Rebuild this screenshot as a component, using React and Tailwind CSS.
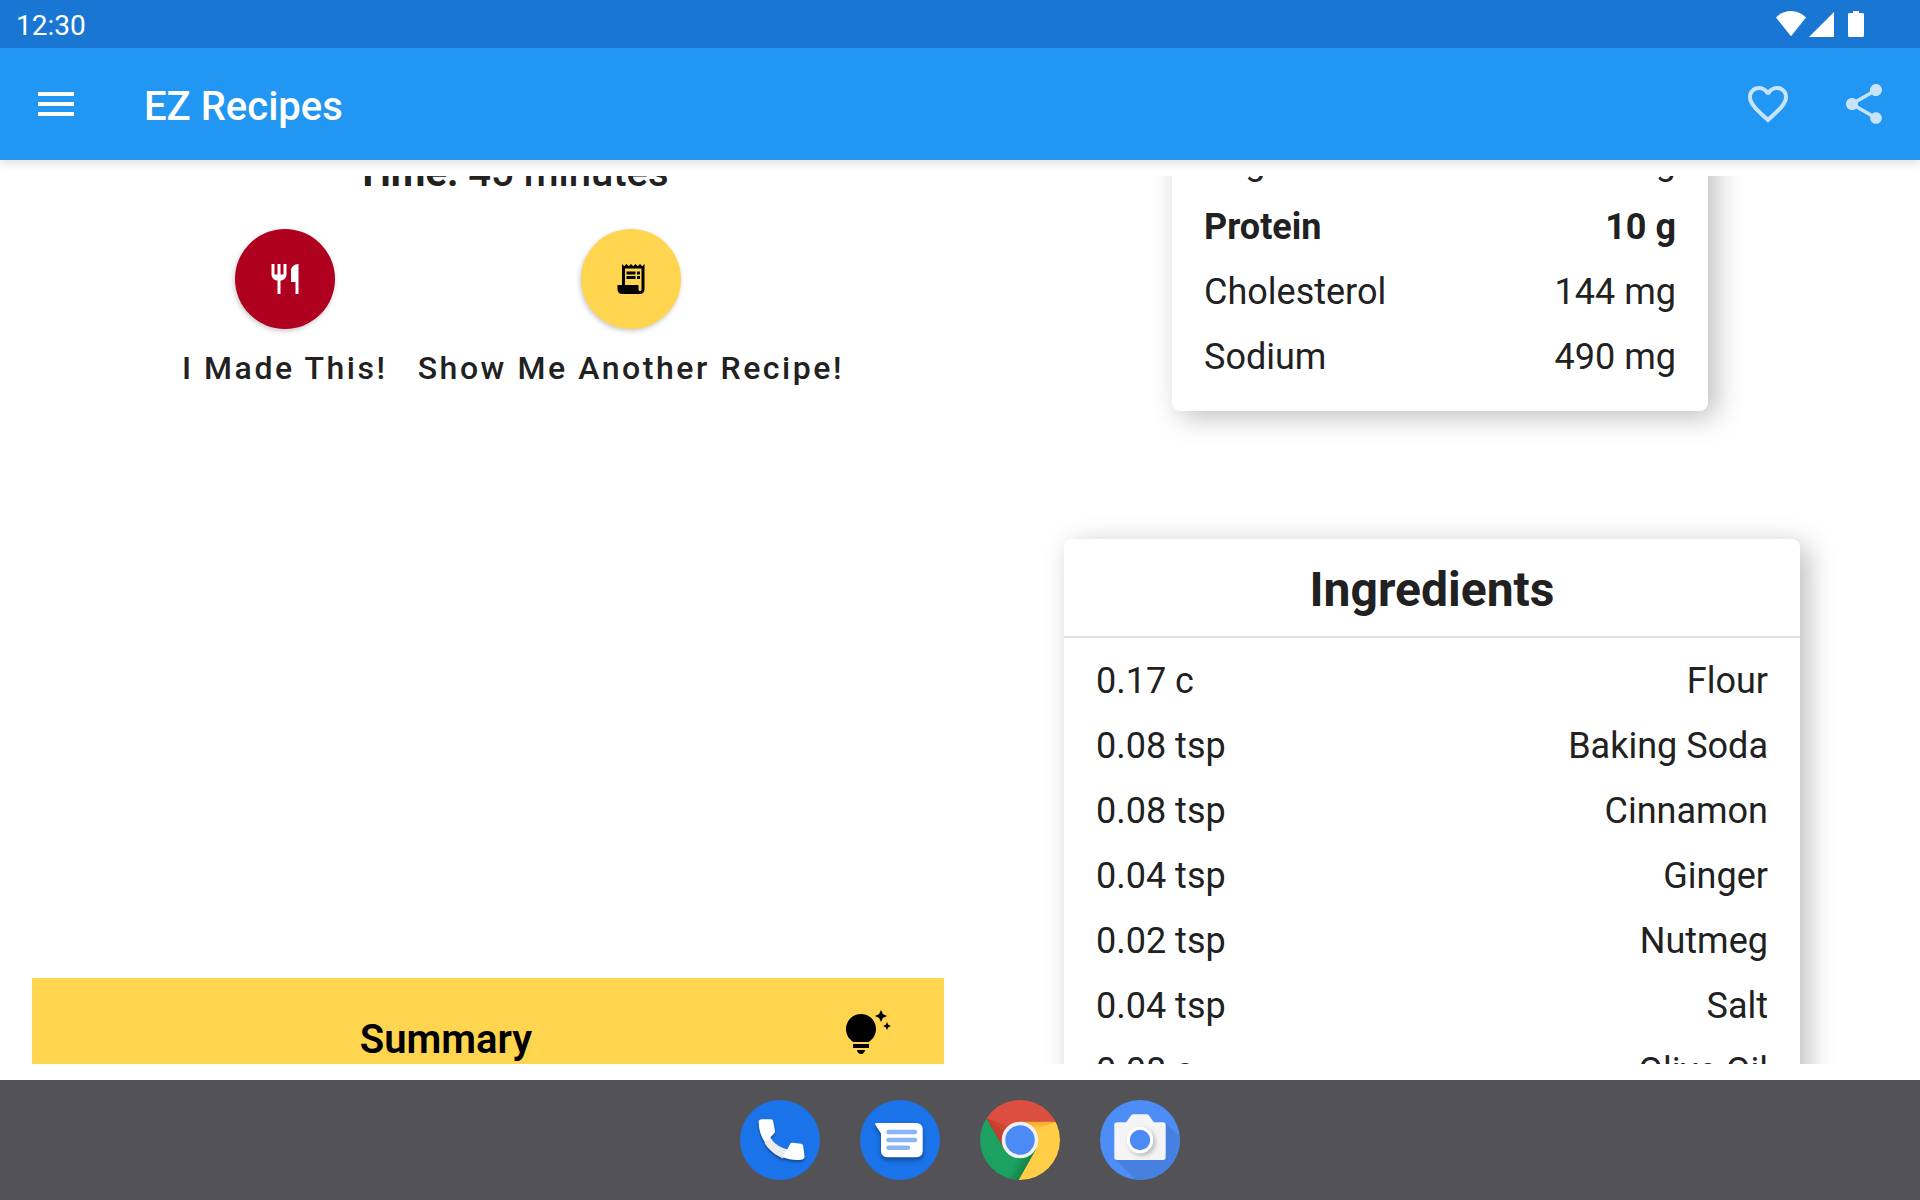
const nutrition = [
  { name: "Sugar", amount: "0 g" },
  { name: "Protein", amount: "10 g", bold: true },
  { name: "Cholesterol", amount: "144 mg" },
  { name: "Sodium", amount: "490 mg" },
];

const ingredients = [
  { amount: "0.17 c", name: "Flour" },
  { amount: "0.08 tsp", name: "Baking Soda" },
  { amount: "0.08 tsp", name: "Cinnamon" },
  { amount: "0.04 tsp", name: "Ginger" },
  { amount: "0.02 tsp", name: "Nutmeg" },
  { amount: "0.04 tsp", name: "Salt" },
  { amount: "0.08 c", name: "Olive Oil" },
];

function Icon({ path, className }) {
  return (
    <svg viewBox="0 0 24 24" fill="currentColor" aria-hidden="true" className={className}>
      <path d={path} />
    </svg>
  );
}

const icons = {
  menu: "M3 18h18v-2H3v2zm0-5h18v-2H3v2zm0-7v2h18V6H3z",
  heart:
    "M16.5 3c-1.74 0-3.41.81-4.5 2.09C10.91 3.81 9.24 3 7.5 3 4.42 3 2 5.42 2 8.5c0 3.78 3.4 6.86 8.55 11.54L12 21.35l1.45-1.32C18.6 15.36 22 12.28 22 8.5 22 5.42 19.58 3 16.5 3zm-4.4 15.55l-.1.1-.1-.1C7.14 14.24 4 11.39 4 8.5 4 6.5 5.5 5 7.5 5c1.54 0 3.04.99 3.57 2.36h1.87C13.46 5.99 14.96 5 16.5 5c2 0 3.5 1.5 3.5 3.5 0 2.89-3.14 5.74-7.9 10.05z",
  share:
    "M18 16.08c-.76 0-1.44.3-1.96.77L8.91 12.7c.05-.23.09-.46.09-.7s-.04-.47-.09-.7l7.05-4.11c.54.5 1.25.81 2.04.81 1.66 0 3-1.34 3-3s-1.34-3-3-3-3 1.34-3 3c0 .24.04.47.09.7L8.04 9.81C7.5 9.31 6.79 9 6 9c-1.66 0-3 1.34-3 3s1.34 3 3 3c.79 0 1.5-.31 2.04-.81l7.12 4.16c-.05.21-.08.43-.08.65 0 1.61 1.31 2.92 2.92 2.92s2.92-1.31 2.92-2.92-1.31-2.92-2.92-2.92z",
  restaurant:
    "M16 6v8h3v8h2V2c-2.76 0-5 2.24-5 4zM11 9H9V2H7v7H5V2H3v7c0 2.21 1.79 4 4 4v9h2v-9c2.21 0 4-1.79 4-4V2h-2v7z",
  receipt:
    "M19.5 3.5L18 2l-1.5 1.5L15 2l-1.5 1.5L12 2l-1.5 1.5L9 2 7.5 3.5 6 2v14H3v3c0 1.66 1.34 3 3 3h12c1.66 0 3-1.34 3-3V2l-1.5 1.5zM19 19c0 .55-.45 1-1 1s-1-.45-1-1v-3H8V5h11v14zM9 7h6v2H9zM16 7h2v2h-2zM9 10h6v2H9zM16 10h2v2h-2z",
  tips: "M7 20h4c0 1.1-.9 2-2 2s-2-.9-2-2zm-2-1h8v-2H5v2zm11.5-9.5c0 3.82-2.66 5.86-3.77 6.5H5.27c-1.11-.64-3.77-2.68-3.77-6.5C1.5 5.36 4.86 2 9 2s7.5 3.36 7.5 7.5zm4.87-2.13L20 8l1.37.63L22 10l.63-1.37L24 8l-1.37-.63L22 6l-.63 1.37zM19 6l.94-2.06L22 3l-2.06-.94L19 0l-.94 2.06L16 3l2.06.94L19 6z",
};

function StatusBar() {
  return (
    <div className="flex h-12 shrink-0 items-center justify-between bg-[#1976d2] pl-4 pr-14 text-white">
      <span className="pt-1 text-[28px] leading-8">12:30</span>
      <svg viewBox="0 0 88 26" fill="currentColor" className="h-[26px] w-[88px]" aria-hidden="true">
        <path d="M0 6.5C4 2.2 9.3 0 15 0s11 2.2 15 6.5L15 25.2z" />
        <path d="M58 1v25H33z" />
        <path d="M77 0h6v2h3.5c.9 0 1.5.6 1.5 1.5v21c0 .9-.6 1.500-1.500 1.500h-13c-.9 0-1.500-.6-1.500-1.500v-21C72 2.600 72.600 2 73.500 2H77z" />
      </svg>
    </div>
  );
}

function AppBar() {
  return (
    <div className="-mb-4 shrink-0 overflow-hidden pb-4">
      <header className="flex h-28 items-center bg-[#2196f3] px-2 text-white shadow-[0_2px_10px_rgba(0,0,0,0.16)]">
        <button aria-label="Menu" className="flex size-24 items-center justify-center">
          <Icon path={icons.menu} className="size-12" />
        </button>
        <h1 className="ml-10 flex-1 pt-[5px] text-[40px] leading-12 font-medium">EZ Recipes</h1>
        <button aria-label="Favorite" className="flex size-24 items-center justify-center opacity-75">
          <Icon path={icons.heart} className="size-12" />
        </button>
        <button aria-label="Share" className="flex size-24 items-center justify-center opacity-75">
          <Icon path={icons.share} className="size-12" />
        </button>
      </header>
    </div>
  );
}

function RoundAction({ id, label, icon, color }) {
  return (
    <div className="flex flex-col items-center gap-[19px]">
      <button
        aria-labelledby={id}
        className={
          "flex size-[100px] items-center justify-center rounded-full shadow-[-1px_2px_5px_rgba(0,0,0,0.22)] " + color
        }
      >
        <Icon path={icon} className="size-9" />
      </button>
      <span id={id} className="text-[32px] leading-10 font-medium tracking-[0.08em] whitespace-nowrap">
        {label}
      </span>
    </div>
  );
}

const cardShadow = "shadow-[8px_6px_28px_rgba(0,0,0,0.26)]";

function DataRow({ left, right, bold }) {
  return (
    <tr className={bold ? "h-[65px] font-bold" : "h-[65px]"}>
      <td className="p-0">{left}</td>
      <td className="p-0 text-right">{right}</td>
    </tr>
  );
}

function Recipe() {
  return (
    <main className="my-4 min-h-0 flex-1 overflow-hidden px-8 text-[#212121]">
      <div className="-mt-[47px] grid grid-cols-[15fr_14fr] items-start">
        <section className="pt-5">
          <p className="text-center text-[40px] leading-12 font-medium">
            <b className="font-bold">Time:</b> 45 minutes
          </p>
          <div className="mt-8 flex justify-center gap-[30px] pl-0.5">
            <RoundAction id="made" label="I Made This!" icon={icons.restaurant} color="bg-[#b00020] text-white" />
            <RoundAction id="another" label="Show Me Another Recipe!" icon={icons.receipt} color="bg-[#ffd54f] text-black" />
          </div>
          <article className="mt-[590px] flex w-[95%] bg-[#ffd54f] px-8 pt-8 pb-8 text-black">
            <h2 className="flex-1 pt-1.5 text-center text-[40px] leading-12 font-semibold">Summary</h2>
            <div className="w-[84px] pl-[15px]">
              <Icon path={icons.tips} className="size-12" />
            </div>
          </article>
        </section>
        <section className="flex flex-col items-center gap-32">
          <div className={"w-[536px] rounded-lg bg-white px-8 pb-[22px] " + cardShadow}>
            <table className="w-full border-collapse text-[36px] leading-[42px]">
              <tbody>
                {nutrition.map((n) => (
                  <DataRow key={n.name} left={n.name} right={n.amount} bold={n.bold} />
                ))}
              </tbody>
            </table>
          </div>
          <div className={"mr-4 w-[736px] rounded-lg bg-white pb-6 " + cardShadow}>
            <h2 className="border-b-2 border-[#e0e0e0] pt-[23px] pb-[18px] text-center text-[48px] leading-14 font-bold">
              Ingredients
            </h2>
            <div className="px-8 pt-[10px]">
              <table className="w-full border-collapse text-[36px] leading-[42px]">
                <tbody>
                  {ingredients.map((i) => (
                    <DataRow key={i.name} left={i.amount} right={i.name} />
                  ))}
                </tbody>
              </table>
            </div>
          </div>
        </section>
      </div>
    </main>
  );
}

function PhoneIcon() {
  return (
    <svg viewBox="0 0 80 80" className="size-20" aria-hidden="true">
      <circle cx="40" cy="40" r="40" fill="#1a73e8" />
      <g className="drop-shadow-[0_2px_1px_rgba(0,0,0,0.35)]">
        <path d="M30 36.500L24.500 43C29 50 35 55 43 58.500L48 49.500C40 47.500 34 44 30 36.500z" fill="#e8eaed" />
        <path d="M21.500 19.300H31c1.200 0 2 .8 2.200 2L35 31c.2 1-.1 1.700-.8 2.400L25 42.500C20.600 36 18.700 29 18.700 22c0-1.700 1.100-2.700 2.800-2.700z" fill="#fff" />
        <path d="M50.500 43.300c.6-.6 1.300-.7 2-.6l8.500 1c1.200.2 2 1 2.200 2.200l1.300 9.600c.3 2.500-1 4-3.500 4.300C54.500 60.400 48 59.500 42.500 57l4.500-7z" fill="#fff" />
      </g>
    </svg>
  );
}

function MessagesIcon() {
  return (
    <svg viewBox="0 0 80 80" className="size-20" aria-hidden="true">
      <circle cx="40" cy="40" r="40" fill="#1a73e8" />
      <path
        d="M16 23h40.700a6 6 0 0 1 6 6v22.300a6 6 0 0 1-6 6H27a6 6 0 0 1-6-6V33.500L15.500 25c-.6-1-.5-2 .5-2z"
        fill="#fff"
        className="drop-shadow-[0_3px_2px_rgba(0,0,0,0.35)]"
      />
      <path d="M28.500 32H55M28.500 40H55M28.500 47.700H48" stroke="#8ab4f8" strokeWidth="4.400" strokeLinecap="round" />
    </svg>
  );
}

function ChromeIcon() {
  return (
    <svg viewBox="0 0 80 80" className="size-20" aria-hidden="true">
      <defs>
        <clipPath id="disc">
          <circle cx="40" cy="40" r="40" />
        </clipPath>
        <linearGradient id="redFade" gradientUnits="userSpaceOnUse" x1="14" y1="36" x2="32" y2="25">
          <stop offset="0" stopColor="#a52714" stopOpacity="0.55" />
          <stop offset="1" stopColor="#a52714" stopOpacity="0" />
        </linearGradient>
        <linearGradient id="greenFade" gradientUnits="userSpaceOnUse" x1="48" y1="68" x2="36" y2="61">
          <stop offset="0" stopColor="#055524" stopOpacity="0.45" />
          <stop offset="1" stopColor="#055524" stopOpacity="0" />
        </linearGradient>
        <linearGradient id="yellowFade" gradientUnits="userSpaceOnUse" x1="60" y1="21" x2="60" y2="30">
          <stop offset="0" stopColor="#ea6100" stopOpacity="0.4" />
          <stop offset="1" stopColor="#ea6100" stopOpacity="0" />
        </linearGradient>
      </defs>
      <g clipPath="url(#disc)">
        <path d="M0 0H80V21.700H40L24 49 6.300 18.300 0 10z" fill="#db4e40" />
        <path d="M6.300 18.300L24 49 40 30z" fill="url(#redFade)" />
        <path d="M40 21.700H80V80H38.500L56 49z" fill="#ffcd46" />
        <path d="M40 21.700H76L55 30z" fill="url(#yellowFade)" />
        <path d="M6.300 18.300L24 49l16 9.500L56 49 38.500 80H0V10z" fill="#1da160" />
        <path d="M56 49L38.500 80 26 80 38 58z" fill="url(#greenFade)" />
      </g>
      <circle cx="40" cy="40" r="18.300" fill="#f1f1f1" />
      <circle cx="40" cy="40" r="14.700" fill="#4c8bf5" />
    </svg>
  );
}

function CameraIcon() {
  return (
    <svg viewBox="0 0 80 80" className="size-20" aria-hidden="true">
      <defs>
        <clipPath id="camDisc">
          <circle cx="40" cy="40" r="40" />
        </clipPath>
      </defs>
      <circle cx="40" cy="40" r="40" fill="#4c8df6" />
      <path d="M65.500 23L90 46v44H46L15 59.500z" fill="#4781df" clipPath="url(#camDisc)" />
      <path
        d="M17 22.300h9.200l5-7c.6-.7 1.200-1 2-1h13.600c.8 0 1.400.3 2 1l5 7H63c1.700 0 2.700 1 2.700 2.700v32.300c0 1.700-1 2.700-2.700 2.700H17c-1.700 0-2.700-1-2.700-2.700V25c0-1.700 1-2.700 2.700-2.700z"
        fill="#f4f4f4"
      />
      <circle cx="40" cy="40" r="13.300" fill="#fff" className="drop-shadow-[2px_2px_2px_rgba(0,0,0,0.25)]" />
      <circle cx="40" cy="40" r="10.200" fill="#4c8bf5" />
    </svg>
  );
}

function Taskbar() {
  return (
    <nav className="flex h-[120px] shrink-0 items-center justify-center gap-10 bg-[#535257]">
      <button aria-label="Phone"><PhoneIcon /></button>
      <button aria-label="Messages"><MessagesIcon /></button>
      <button aria-label="Chrome"><ChromeIcon /></button>
      <button aria-label="Camera"><CameraIcon /></button>
    </nav>
  );
}

export default function App() {
  return (
    <div className="flex h-screen flex-col overflow-hidden bg-white font-[Roboto,sans-serif]">
      <StatusBar />
      <AppBar />
      <Recipe />
      <Taskbar />
    </div>
  );
}
